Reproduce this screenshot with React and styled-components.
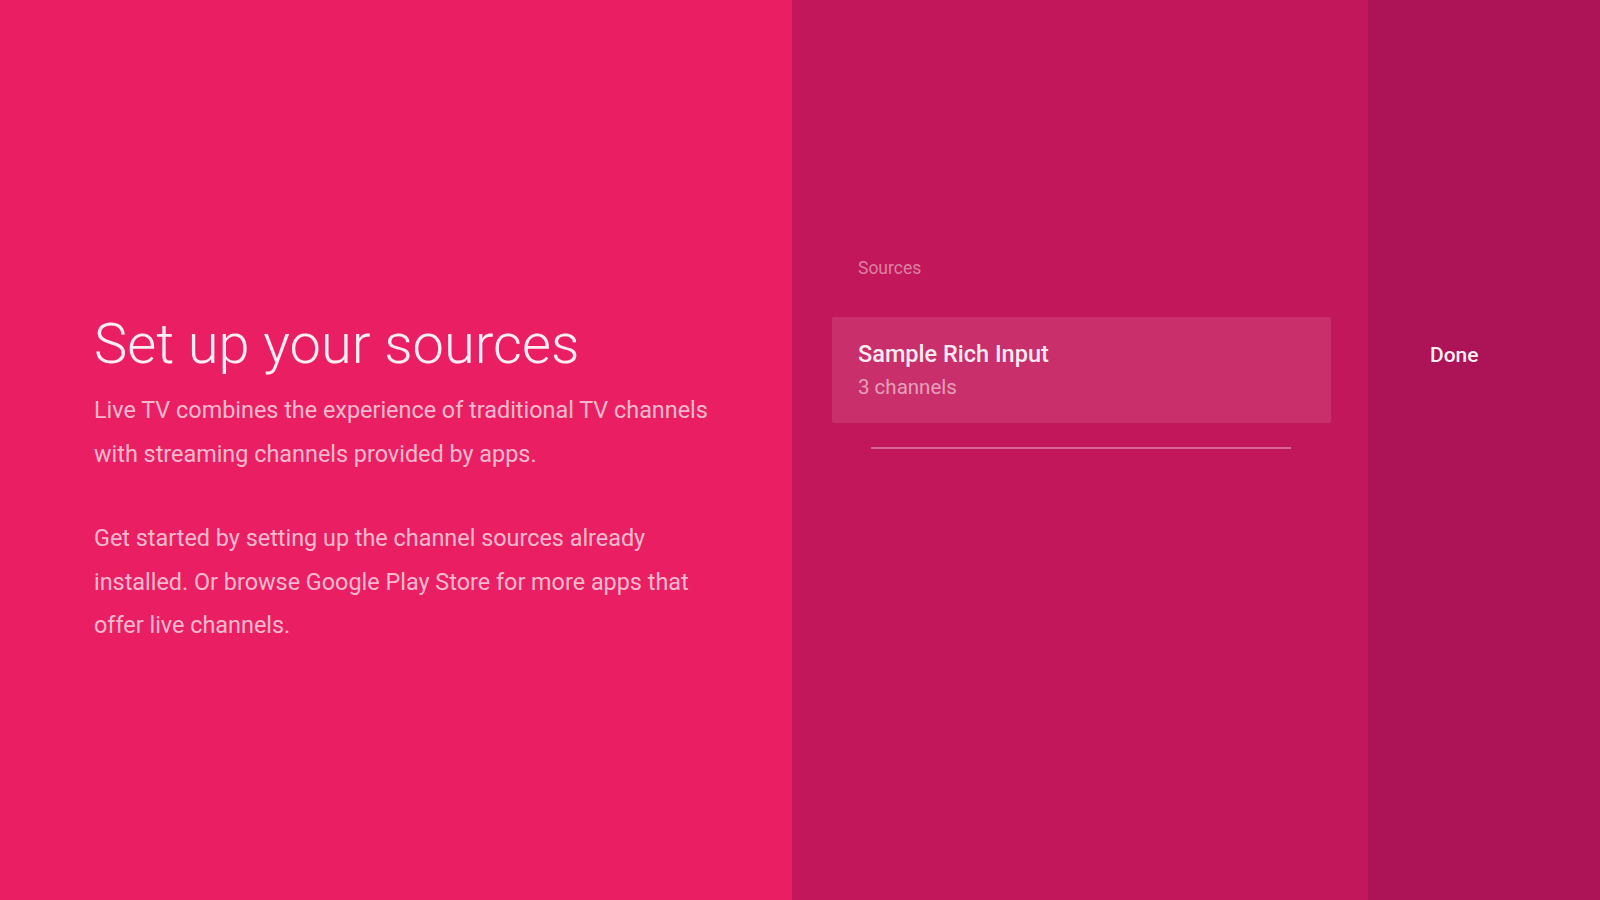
import React from "react";
import styled, { createGlobalStyle } from "styled-components";

const GlobalStyle = createGlobalStyle`
  html, body {
    margin: 0;
    padding: 0;
    height: 100%;
  }
  body {
    font-family: Roboto, "Noto Sans", "Liberation Sans", sans-serif;
    -webkit-font-smoothing: antialiased;
  }
  * {
    box-sizing: border-box;
  }
`;

const Screen = styled.div`
  display: flex;
  width: 100vw;
  height: 100vh;
  overflow: hidden;
`;

const GuidancePanel = styled.section`
  flex: 0 0 792px;
  background: #e91e63;
  padding: 312px 60px 0 94px;
`;

const Title = styled.h1`
  margin: 0;
  font-size: 56px;
  line-height: 64px;
  font-weight: 300;
  color: rgba(255, 255, 255, 0.92);
`;

const Description = styled.div`
  margin-top: 13px;
  max-width: 640px;
`;

const Paragraph = styled.p`
  margin: 0 0 41px;
  font-size: 23.4px;
  line-height: 43.5px;
  font-weight: 400;
  color: rgba(255, 255, 255, 0.7);
`;

const ListPanel = styled.section`
  flex: 0 0 576px;
  background: #c2185b;
  padding: 257px 37px 0 40px;
  display: flex;
  flex-direction: column;
`;

const ListHeader = styled.div`
  padding-left: 26px;
  font-size: 17.5px;
  line-height: 22px;
  color: rgba(255, 255, 255, 0.45);
`;

const SourceItem = styled.div`
  margin-top: 38px;
  height: 106px;
  padding: 0 26px;
  display: flex;
  flex-direction: column;
  justify-content: center;
  background: rgba(255, 255, 255, 0.1);
  border-radius: 2px;
`;

const ItemTitle = styled.div`
  font-size: 23.5px;
  line-height: 32px;
  font-weight: 500;
  color: rgba(255, 255, 255, 0.92);
`;

const ItemSubtitle = styled.div`
  margin-top: 1px;
  font-size: 20.5px;
  line-height: 32px;
  color: rgba(255, 255, 255, 0.55);
`;

const Divider = styled.hr`
  margin: 24px 40px 0 39px;
  height: 2px;
  border: 0;
  background: rgba(255, 255, 255, 0.35);
`;

const ActionPanel = styled.section`
  flex: 1 1 auto;
  background: #ad1457;
  padding: 340px 0 0 62px;
`;

const ActionButton = styled.button`
  padding: 0;
  border: 0;
  background: none;
  font-family: inherit;
  font-size: 21px;
  line-height: 30px;
  font-weight: 500;
  color: rgba(255, 255, 255, 0.95);
  cursor: pointer;
`;

export default function App() {
  return (
    <>
      <GlobalStyle />
      <Screen>
        <GuidancePanel>
          <Title>Set up your sources</Title>
          <Description>
            <Paragraph>
              Live TV combines the experience of traditional TV channels with
              streaming channels provided by apps.
            </Paragraph>
            <Paragraph>
              Get started by setting up the channel sources already installed.
              Or browse Google Play Store for more apps that offer live
              channels.
            </Paragraph>
          </Description>
        </GuidancePanel>
        <ListPanel>
          <ListHeader>Sources</ListHeader>
          <SourceItem>
            <ItemTitle>Sample Rich Input</ItemTitle>
            <ItemSubtitle>3 channels</ItemSubtitle>
          </SourceItem>
          <Divider />
        </ListPanel>
        <ActionPanel>
          <ActionButton>Done</ActionButton>
        </ActionPanel>
      </Screen>
    </>
  );
}
